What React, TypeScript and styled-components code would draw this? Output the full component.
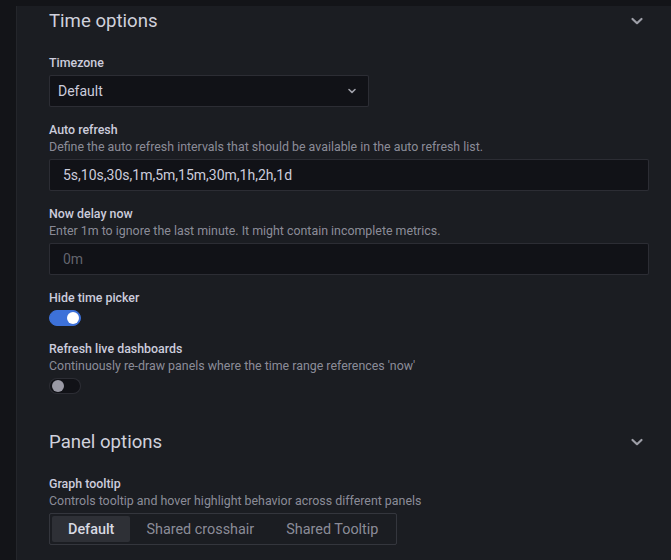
import React from "react";
import styled, { createGlobalStyle } from "styled-components";

const Global = createGlobalStyle`
  html, body { margin: 0; padding: 0; background: #131418; }
  * { box-sizing: border-box; }
  body { font-family: Roboto, "Liberation Sans", sans-serif; color: #ccccdc; }
`;

const Page = styled.div`
  min-height: 560px;
  padding: 6px 0 0 16px;
  background: #131418;
  display: flex;
`;

const Panel = styled.div`
  flex: 1;
  min-height: 554px;
  background: #1b1d22;
  border-left: 1px solid #24262b;
  padding: 0 22px 0 32px;
`;

const Section = styled.section`
  padding: 3px 0 33px;
`;

const SectionHeader = styled.div`
  display: flex;
  align-items: center;
  justify-content: space-between;
  height: 24px;
  margin-bottom: 21px;
`;

const SectionTitle = styled.h3`
  margin: 0;
  font-size: 18.6px;
  line-height: 24px;
  font-weight: 400;
  color: #d0d1dc;
`;

const IconBox = styled.span`
  width: 24px;
  height: 24px;
  display: inline-flex;
  align-items: center;
  justify-content: center;
`;

const Field = styled.div`
  margin-bottom: 14px;
  &:last-child { margin-bottom: 0; }
`;

const Label = styled.div`
  font-size: 12.4px;
  line-height: 17px;
  font-weight: 500;
  color: #ccccdc;
`;

const Description = styled.div`
  font-size: 12.4px;
  line-height: 17px;
  color: rgba(204, 204, 220, 0.65);
`;

const Control = styled.div`
  margin-top: 4px;
`;

const SelectBox = styled.div`
  width: 320px;
  height: 32px;
  background: #111217;
  border: 1px solid rgba(204, 204, 220, 0.15);
  border-radius: 2px;
  padding: 0 8px;
  display: flex;
  align-items: center;
  justify-content: space-between;
  font-size: 14px;
  color: #ccccdc;
`;

const TextInput = styled.input`
  width: 100%;
  height: 32px;
  background: #111217;
  border: 1px solid rgba(204, 204, 220, 0.15);
  border-radius: 2px;
  padding: 0 12px 0 13px;
  font-family: Roboto, "Liberation Sans", sans-serif;
  font-size: 14px;
  color: #ccccdc;
  outline: none;
  &::placeholder { color: rgba(204, 204, 220, 0.45); }
`;

const SwitchTrack = styled.span<{ $on: boolean }>`
  display: block;
  position: relative;
  width: 32px;
  height: 16px;
  border-radius: 8px;
  background: ${(p) => (p.$on ? "#3d71d9" : "#111217")};
  border: 1px solid ${(p) => (p.$on ? "#3d71d9" : "rgba(204, 204, 220, 0.15)")};
  &::after {
    content: "";
    position: absolute;
    top: 1px;
    left: ${(p) => (p.$on ? "17px" : "2px")};
    width: 12px;
    height: 12px;
    border-radius: 50%;
    background: ${(p) => (p.$on ? "#ffffff" : "#9a9aa5")};
  }
`;

const RadioGroup = styled.div`
  display: inline-flex;
  height: 32px;
  padding: 2px;
  border: 1px solid rgba(204, 204, 220, 0.15);
  border-radius: 2px;
`;

const RadioButton = styled.button<{ $active?: boolean }>`
  height: 26px;
  padding: 0 16px;
  border: none;
  border-radius: 2px;
  background: ${(p) => (p.$active ? "#2e3036" : "transparent")};
  color: ${(p) => (p.$active ? "#d8d9e2" : "rgba(204, 204, 220, 0.65)")};
  font-family: Roboto, "Liberation Sans", sans-serif;
  font-size: 14.4px;
  font-weight: ${(p) => (p.$active ? 500 : 400)};
  cursor: pointer;
`;

const AngleDown = ({ size = 24, color = "#9d9ea7" }: { size?: number; color?: string }) => (
  <svg width={size} height={size} viewBox="0 0 24 24" fill="none">
    <path d="M7.5 10 L12 14.2 L16.5 10" stroke={color} strokeWidth="2.2" strokeLinecap="round" strokeLinejoin="round" />
  </svg>
);

const SmallAngle = () => (
  <svg width="16" height="16" viewBox="0 0 16 16" fill="none">
    <path d="M5 6.5 L8 9.3 L11 6.5" stroke="#a0a1aa" strokeWidth="1.6" strokeLinecap="round" strokeLinejoin="round" />
  </svg>
);

const SectionHead = ({ title }: { title: string }) => (
  <SectionHeader>
    <SectionTitle>{title}</SectionTitle>
    <IconBox>
      <AngleDown />
    </IconBox>
  </SectionHeader>
);

export default function App() {
  return (
    <>
      <Global />
      <Page>
        <Panel>
          <Section>
            <SectionHead title="Time options" />
            <Field>
              <Label>Timezone</Label>
              <Control>
                <SelectBox>
                  <span>Default</span>
                  <SmallAngle />
                </SelectBox>
              </Control>
            </Field>
            <Field>
              <Label>Auto refresh</Label>
              <Description>Define the auto refresh intervals that should be available in the auto refresh list.</Description>
              <Control>
                <TextInput defaultValue="5s,10s,30s,1m,5m,15m,30m,1h,2h,1d" />
              </Control>
            </Field>
            <Field>
              <Label>Now delay now</Label>
              <Description>Enter 1m to ignore the last minute. It might contain incomplete metrics.</Description>
              <Control>
                <TextInput placeholder="0m" />
              </Control>
            </Field>
            <Field>
              <Label>Hide time picker</Label>
              <Control>
                <SwitchTrack $on={true} />
              </Control>
            </Field>
            <Field>
              <Label>Refresh live dashboards</Label>
              <Description>Continuously re-draw panels where the time range references 'now'</Description>
              <Control>
                <SwitchTrack $on={false} />
              </Control>
            </Field>
          </Section>
          <Section>
            <SectionHead title="Panel options" />
            <Field>
              <Label>Graph tooltip</Label>
              <Description>Controls tooltip and hover highlight behavior across different panels</Description>
              <Control>
                <RadioGroup>
                  <RadioButton $active>Default</RadioButton>
                  <RadioButton>Shared crosshair</RadioButton>
                  <RadioButton>Shared Tooltip</RadioButton>
                </RadioGroup>
              </Control>
            </Field>
          </Section>
        </Panel>
      </Page>
    </>
  );
}
